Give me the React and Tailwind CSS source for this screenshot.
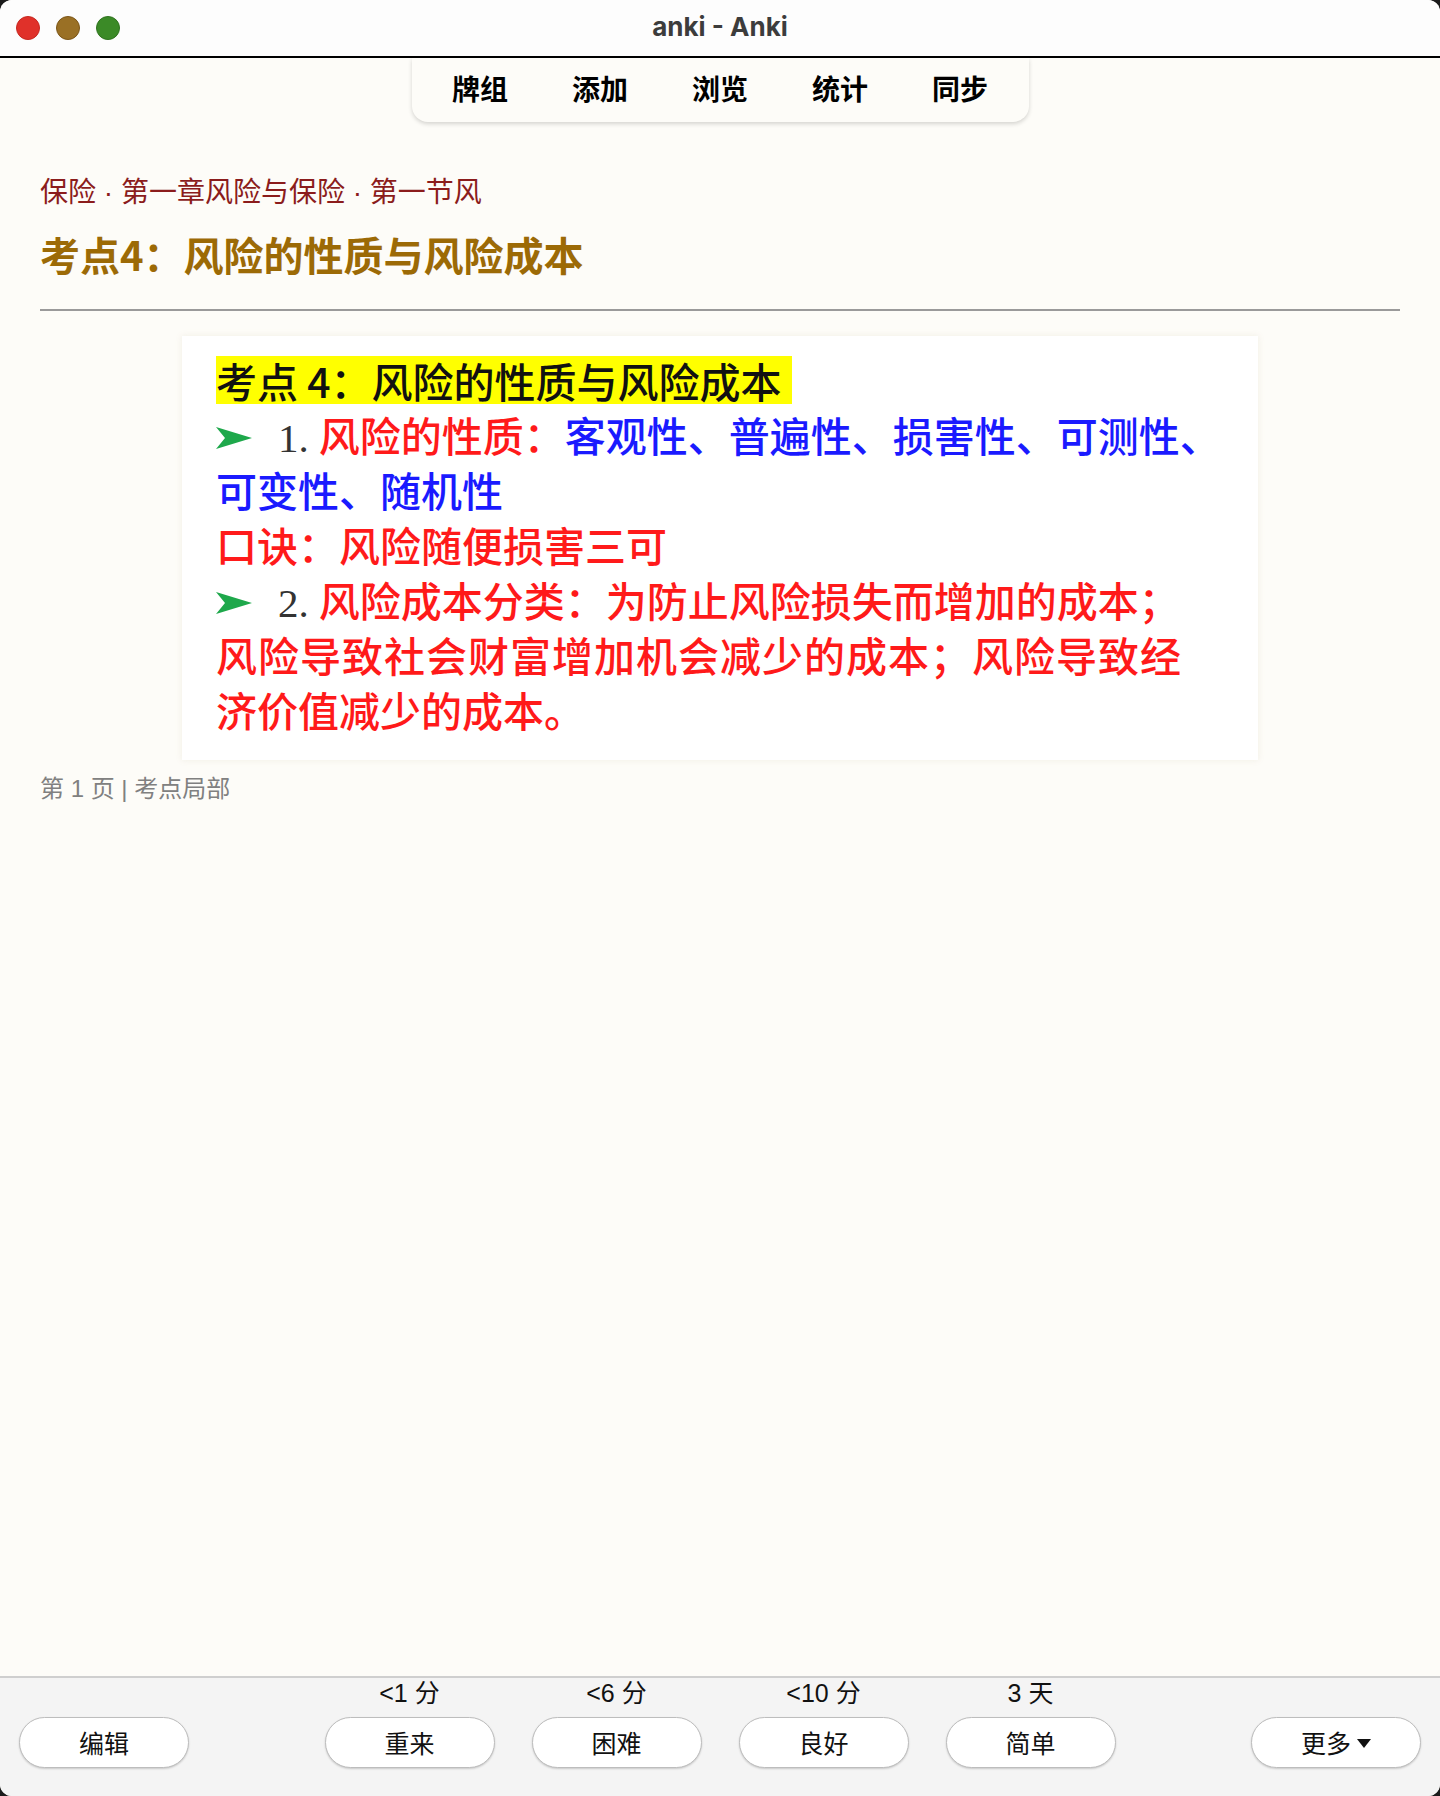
import React from 'react';

const cjk = { fontFamily: '"Noto Sans CJK SC", "Noto Sans", sans-serif' };
const ui = { fontFamily: '"Liberation Sans", "Noto Sans CJK SC", sans-serif' };

const navItems = ['牌组', '添加', '浏览', '统计', '同步'];

const answers = [
  { label: '<1 分', text: '重来' },
  { label: '<6 分', text: '困难' },
  { label: '<10 分', text: '良好' },
  { label: '3 天', text: '简单' },
];

function Arrow() {
  return (
    <svg width="36" height="24" viewBox="0 0 36 24" className="inline-block align-middle mr-[26px] -mt-[6px]">
      <polygon points="0,1 36,12 0,23 9,12" fill="#1ea84b" />
    </svg>
  );
}

function PillButton({ children }) {
  return (
    <button
      className="w-[170px] h-[51px] rounded-full bg-white border-[1.5px] border-[#bdbdbd] shadow-[0_1px_2px_rgba(0,0,0,0.18)] text-[25px] text-[#111] flex items-center justify-center"
      style={cjk}
    >
      {children}
    </button>
  );
}

export default function App() {
  return (
    <div className="bg-[#1b1b1b] w-[1440px] h-[1796px]">
      <div className="w-full h-full flex flex-col rounded-[12px] overflow-hidden bg-[#fdfcf8]">
        {/* title bar */}
        <div className="h-[58px] flex-shrink-0 grid grid-cols-[1fr_auto_1fr] items-center bg-[#fdfdfd] border-b-2 border-black">
          <div className="flex items-center gap-4 pl-4">
            <span className="w-6 h-6 rounded-full bg-[#e0312a] border border-[#c72820]" />
            <span className="w-6 h-6 rounded-full bg-[#9a7025] border border-[#7c5618]" />
            <span className="w-6 h-6 rounded-full bg-[#3b8a27] border border-[#2f731f]" />
          </div>
          <div className="-mt-[3px] text-[26px] font-bold text-[#3c3c3c]" style={{ fontFamily: 'Inter, "Liberation Sans", sans-serif' }}>
            anki - Anki
          </div>
          <div />
        </div>

        {/* main */}
        <div className="flex-1 flex flex-col">
          <nav className="mx-auto w-[617px] h-[64px] flex items-center justify-center pb-[4px] rounded-b-[16px] bg-[#fdfcf8] shadow-[0_2px_4px_rgba(0,0,0,0.16)]">
            {navItems.map(n => (
              <span key={n} className="w-[120px] text-center text-[28px] font-bold text-black" style={cjk}>
                {n}
              </span>
            ))}
          </nav>

          <div className="px-[40px]">
            <p className="mt-[53px] text-[28px] leading-[36px] text-[#8b1c1c]" style={ui}>
              保险 · 第一章风险与保险 · 第一节风
            </p>
            <h1 className="mt-[17px] text-[40px] leading-[52px] font-bold text-[#9c6a06]" style={cjk}>
              考点4：风险的性质与风险成本
            </h1>
            <div className="mt-[29px] h-[2px] bg-[#9a9a9a]" />

            <div className="mt-[25px] mx-auto w-[1076px] h-[424px] bg-white shadow-[0_0_6px_rgba(240,236,225,0.9)] pl-[34px] pt-[16px] text-[41px] leading-[55px] font-medium" style={cjk}>
              <div className="h-[55px] flex items-center">
                <span className="inline-block h-[48px] leading-[48px] bg-[#ffff00] text-[#111] pr-[10px]">
                  考点 4：风险的性质与风险成本
                </span>
              </div>
              <div className="h-[55px] whitespace-nowrap">
                <Arrow />
                <span className="text-[#333] mr-[10px] font-normal" style={{ fontFamily: '"Liberation Serif", serif' }}>1.</span>
                <span className="text-[#ff1a1a]">风险的性质：</span>
                <span className="text-[#1a1aff]">客观性、普遍性、损害性、可测性、</span>
              </div>
              <div className="h-[55px] text-[#1a1aff]">可变性、随机性</div>
              <div className="h-[55px] text-[#ff1a1a]">口诀：风险随便损害三可</div>
              <div className="h-[55px] whitespace-nowrap">
                <Arrow />
                <span className="text-[#333] mr-[10px] font-normal" style={{ fontFamily: '"Liberation Serif", serif' }}>2.</span>
                <span className="text-[#ff1a1a]">风险成本分类：为防止风险损失而增加的成本；</span>
              </div>
              <div className="h-[55px] text-[#ff1a1a] whitespace-nowrap tracking-[1px]">风险导致社会财富增加机会减少的成本；风险导致经</div>
              <div className="h-[55px] text-[#ff1a1a]">济价值减少的成本。</div>
            </div>

            <p className="mt-[14px] text-[24px] leading-[30px] text-[#808080]" style={ui}>
              第 1 页 | 考点局部
            </p>
          </div>
        </div>

        {/* bottom bar */}
        <div className="h-[120px] flex-shrink-0 bg-[#f4f4f4] border-t-2 border-[#cfcfcf] flex items-end justify-between px-[19px] pb-[28px]">
          <PillButton>编辑</PillButton>
          <div className="flex gap-[37px]">
            {answers.map(a => (
              <div key={a.text} className="flex flex-col items-center">
                <span className="text-[25px] leading-[28px] mb-[10px] text-[#111]" style={ui}>{a.label}</span>
                <PillButton>{a.text}</PillButton>
              </div>
            ))}
          </div>
          <PillButton>
            更多
            <svg width="14" height="9" viewBox="0 0 14 9" className="ml-[6px] mt-[2px]">
              <polygon points="0,0 14,0 7,9" fill="#111" />
            </svg>
          </PillButton>
        </div>
      </div>
    </div>
  );
}
